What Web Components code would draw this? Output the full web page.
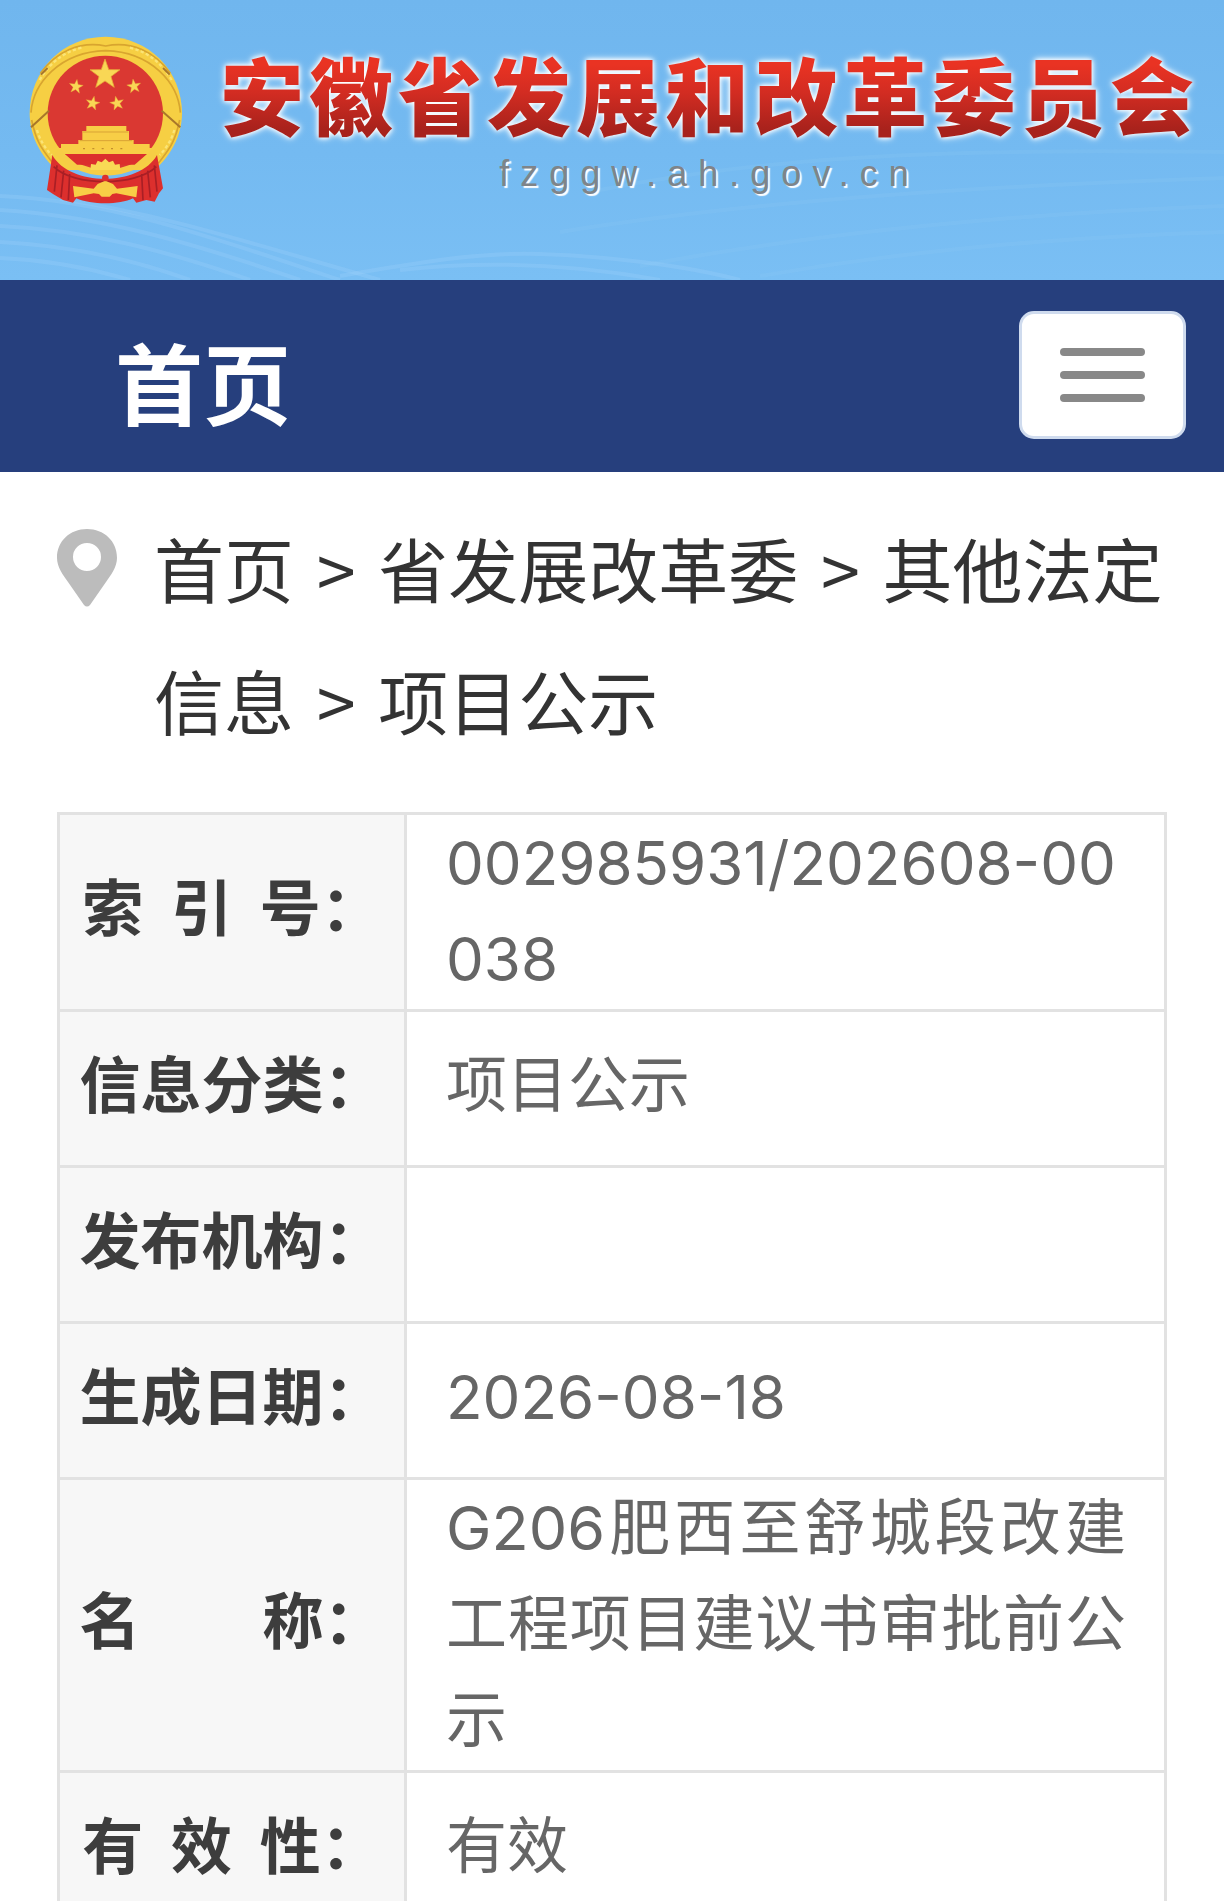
<!DOCTYPE html>
<html lang="zh-CN">
<head>
<meta charset="UTF-8">
<meta name="viewport" content="width=device-width, initial-scale=1">
<title>安徽省发展和改革委员会</title>
<style>
    :root {
        --nav-color: #263f7d;
        --line-color: #e2e2e2;
        --label-bg: #f7f7f7;
        --text-color: #333;
        --label-color: #3d3d3d;
        --value-color: #666;
    }
    body {
        margin: 0;
        background: #fff;
        color: var(--text-color);
        font-family: "Noto Sans CJK SC", sans-serif;
    }
    main {
        padding: 30px 57px 0;
    }
</style>
</head>
<body>
<site-header>
    安徽省发展和改革委员会
    <span slot="domain">fzggw.ah.gov.cn</span>
</site-header>
<site-nav><a href="#home">首页</a></site-nav>
<main>
    <crumb-trail>
        <crumb-item href="#home">首页</crumb-item>
        <crumb-item href="#fzggw">省发展改革委</crumb-item>
        <crumb-item href="#other">其他法定<wbr>信息</crumb-item>
        <crumb-item href="#project">项目公示</crumb-item>
    </crumb-trail>
    <info-table></info-table>
</main>

<script>
// banner with emblem and site name
class SiteHeader extends HTMLElement {
    constructor() {
        super();
        this.attachShadow({ mode: 'open' });
        this.shadowRoot.innerHTML = `
            <style>
                :host {
                    display: block;
                    position: relative;
                    background: linear-gradient(#70b6ee, #74baf1 55%, #7abff4);
                }
                .waves {
                    position: absolute;
                    inset: 0;
                    width: 100%;
                    height: 100%;
                }
                .banner {
                    position: relative;
                    display: flex;
                    justify-content: space-between;
                    align-items: flex-start;
                    box-sizing: border-box;
                    min-height: 280px;
                    padding: 36px 25px 0 29px;
                }
                .emblem {
                    flex: none;
                    width: 154px;
                    height: 168px;
                }
                .names {
                    display: flex;
                    flex-direction: column;
                    align-items: center;
                }
                h1 {
                    margin: 0;
                    font-size: 84px;
                    line-height: 114px;
                    font-weight: 900;
                    letter-spacing: 5px;
                    white-space: nowrap;
                    color: #d22c22;
                    background: linear-gradient(#e93323 25%, #d22c22 50%, #a8221c 82%);
                    -webkit-background-clip: text;
                    background-clip: text;
                    -webkit-text-fill-color: transparent;
                    filter: drop-shadow(0 0 2px #fff) drop-shadow(0 0 3px #fff);
                }
                .domain {
                    font-family: "Liberation Sans", Arial, sans-serif;
                    font-size: 36px;
                    line-height: 48px;
                    letter-spacing: 11px;
                    color: #7f8489;
                    text-shadow: 2px 2px 1px #fff;
                }
            </style>
            <svg class="waves" viewBox="0 0 1224 280" preserveAspectRatio="none" fill="none" stroke="#a3d4fa" stroke-width="4" stroke-opacity="0.25" aria-hidden="true">
                <path d="M0 196C110 200 220 240 340 280"/>
                <path d="M0 210C100 216 190 242 300 280"/>
                <path d="M0 226C90 230 170 252 250 280"/>
                <path d="M0 242C80 246 140 262 190 280"/>
                <path d="M0 258C50 260 90 268 130 280"/>
                <path d="M60 199C160 214 240 240 380 280"/>
                <path d="M340 276C420 262 480 252 540 254S680 264 740 280"/>
                <path d="M400 270C470 262 560 262 660 280"/>
                <path stroke-opacity="0.1" d="M600 190C800 150 1000 150 1224 152"/>
                <path stroke-opacity="0.1" d="M560 232C760 200 980 186 1224 178"/>
                <path stroke-opacity="0.1" d="M640 266C800 236 1000 214 1224 206"/>
                <path stroke-opacity="0.1" d="M760 276C900 252 1040 238 1224 232"/>
            </svg>
            <div class="banner">
                <svg class="emblem" viewBox="28 48 462 504" role="img" aria-label="国徽">
                    <defs>
                        <path id="star" d="M0-10L2.4-3.2 9.5-3.1 3.8 1.2 5.9 8.1 0 4 -5.9 8.1 -3.8 1.2 -9.5-3.1 -2.4-3.2Z"/>
                    </defs>
                    <path d="M258 50C385 50 487 150 487 280C487 350 450 410 405 450H110C65 410 30 350 30 280C30 150 131 50 258 50Z" fill="#f6cf43"/>
                    <path d="M62 160C110 95 180 62 258 78C336 62 405 95 452 160M34 278C40 190 120 96 258 92C396 96 476 190 482 278M36 300C50 370 70 390 100 430M480 300C466 370 446 390 416 430" fill="none" stroke="#d8a52f" stroke-width="5"/>
                    <path d="M60 180C90 130 130 95 190 82M456 180C426 130 386 95 326 82M52 330C60 360 80 390 96 405M464 330C456 360 436 390 420 405" fill="none" stroke="#fbe476" stroke-width="7" stroke-dasharray="10 7"/>
                    <circle cx="257" cy="280" r="173" fill="#da3832"/>
                    <path d="M34 322L88 272M482 322L426 272M64 164L84 144M450 164L430 144" stroke="#a9772a" stroke-width="6"/>
                    <g fill="#f9d755" stroke="#e8ab38" stroke-width="0.5">
                        <use href="#star" transform="translate(256 164) scale(4.7)"/>
                        <use href="#star" transform="translate(169 200) rotate(8) scale(2.2)"/>
                        <use href="#star" transform="translate(343 199) rotate(-8) scale(2.2)"/>
                        <use href="#star" transform="translate(219 250) rotate(12) scale(2.2)"/>
                        <use href="#star" transform="translate(292 250) rotate(-12) scale(2.2)"/>
                    </g>
                    <path d="M98 405C150 500 360 500 412 405L430 505 418 520 405 545 380 540 350 548 340 535C300 555 215 555 170 535L160 548 130 540 100 522 82 510Z" fill="#dc2f2d"/>
                    <path d="M112 436L104 515M132 452L124 532M150 462L146 540M404 436L412 515M384 452L392 532M366 462L370 540M102 440C160 500 350 500 410 440" fill="none" stroke="#a91f25" stroke-width="5"/>
                    <path d="M200 318H320V333H328V360H342V372H390V384H402L398 402H118L112 384H124V372H176V360H188V333H200Z" fill="#f8ce46"/>
                    <path d="M190 336H326M180 362H338" stroke="#d9a334" stroke-width="3"/>
                    <path d="M190 386H330" stroke="#c48f2d" stroke-width="4" stroke-dasharray="6 22"/>
                    <path d="M112 394C145 425 180 455 258 458C336 455 375 425 404 394" fill="none" stroke="#f6cd45" stroke-width="19"/>
                    <path d="M136 402H382L345 434H172Z" fill="#dc2f2d"/>
                    <path d="M212 450L214 432 228 434 234 422 246 427 257 416 268 427 280 422 286 434 300 432 302 450Z" fill="#f9d955"/>
                    <path d="M160 498L222 506 234 492 257 482 280 492 292 506 354 498 350 532 290 520 278 522 270 530 246 530 238 522 222 520 164 532Z" fill="#f8ce46"/>
                    <circle cx="257" cy="474" r="10" fill="#dc2f2d"/>
                </svg>
                <div class="names">
                    <h1><slot></slot></h1>
                    <div class="domain"><slot name="domain"></slot></div>
                </div>
            </div>
        `;
    }
}

class SiteNav extends HTMLElement {
    constructor() {
        super();
        this.attachShadow({ mode: 'open' });
        this.shadowRoot.innerHTML = `
            <style>
                :host {
                    display: block;
                    background: var(--nav-color);
                }
                nav {
                    display: flex;
                    justify-content: space-between;
                    align-items: flex-start;
                    padding: 31px 38px 23px 115px;
                }
                ::slotted(a) {
                    color: #fff;
                    font-size: 88px;
                    line-height: 138px;
                    font-weight: 700;
                    text-decoration: none;
                }
                button {
                    display: flex;
                    flex-direction: column;
                    justify-content: center;
                    align-items: center;
                    gap: 15px;
                    box-sizing: border-box;
                    width: 167px;
                    height: 128px;
                    padding: 0;
                    border: 3px solid #cfdbee;
                    border-radius: 15px;
                    background: #fff;
                }
                .bar {
                    width: 85px;
                    height: 8px;
                    border-radius: 4px;
                    background: #888;
                }
            </style>
            <nav>
                <slot></slot>
                <button type="button" aria-label="菜单">
                    <span class="bar"></span>
                    <span class="bar"></span>
                    <span class="bar"></span>
                </button>
            </nav>
        `;
    }
}

class CrumbTrail extends HTMLElement {
    constructor() {
        super();
        this.attachShadow({ mode: 'open' });
        this.shadowRoot.innerHTML = `
            <style>
                :host {
                    display: flex;
                    align-items: flex-start;
                    gap: 37px;
                    font-size: 70px;
                    line-height: 132px;
                }
                svg {
                    flex: none;
                    width: 60px;
                    height: 78px;
                    margin-top: 27px;
                }
                nav {
                    flex: 1;
                }
            </style>
            <svg viewBox="0 0 60 78" aria-hidden="true">
                <path fill="#bcbcbc" fill-rule="evenodd" d="M30 0C13 0 0 12 0 29C0 38 6 46 11 53L27 76Q30 79 33 76L49 53C54 46 60 38 60 29C60 12 47 0 30 0ZM30 14A14 14 0 1 1 30 42A14 14 0 1 1 30 14Z"/>
            </svg>
            <nav><slot></slot></nav>
        `;
    }
}

// one link, followed by ">" unless it is the last
class CrumbItem extends HTMLElement {
    constructor() {
        super();
        this.attachShadow({ mode: 'open' });
    }

    connectedCallback() {
        this.shadowRoot.innerHTML = `
            <style>
                :host {
                    display: inline;
                }
                a {
                    color: inherit;
                    text-decoration: none;
                }
                .sep {
                    margin: 0 7px;
                }
                :host(:last-of-type) .sep {
                    display: none;
                }
            </style><a href="${this.getAttribute('href')}"><slot></slot></a><span class="sep"> &gt;</span>`;
    }
}

class InfoTable extends HTMLElement {
    constructor() {
        super();
        this.attachShadow({ mode: 'open' });
        this.rows = [
            { label: '索&nbsp;&nbsp;引&nbsp;&nbsp;号：', value: '002985931/202608-00<wbr>038', type: 'number long' },
            { label: '信息分类：', value: '项目公示' },
            { label: '发布机构：', value: '' },
            { label: '生成日期：', value: '2026-08-18', type: 'number' },
            { label: '名　　称：', value: 'G206肥西至舒城段改建工程项目建议书审批前公示', type: 'long' },
            { label: '有&nbsp;&nbsp;效&nbsp;&nbsp;性：', value: '有效' }
        ];
    }

    connectedCallback() {
        this.render();
    }

    render() {
        this.shadowRoot.innerHTML = `
            <style>
                :host {
                    display: block;
                    margin-top: 46px;
                }
                table {
                    width: 100%;
                    table-layout: fixed;
                    border-collapse: collapse;
                    font-size: 61px;
                    line-height: 96px;
                }
                th, td {
                    box-sizing: border-box;
                    height: 156px;
                    border: 3px solid var(--line-color);
                    vertical-align: middle;
                }
                th {
                    width: 347px;
                    padding: 0 0 14px;
                    background: var(--label-bg);
                    color: var(--label-color);
                    font-weight: 700;
                    text-align: center;
                    white-space: nowrap;
                }
                td {
                    padding: 0 38px 8px 39px;
                    color: var(--value-color);
                    font-family: Inter, "Noto Sans CJK SC", sans-serif;
                    text-align: justify;
                }
                .long {
                    padding-bottom: 2px;
                }
                .number {
                    font-size: 60px;
                }
            </style>
            <table>
                <tbody>
                    ${this.rows.map(row => `
                        <tr>
                            <th scope="row">${row.label}</th>
                            <td class="${row.type || 'text'}">${row.value}</td>
                        </tr>
                    `).join('')}
                </tbody>
            </table>
        `;
    }
}

customElements.define('site-header', SiteHeader);
customElements.define('site-nav', SiteNav);
customElements.define('crumb-trail', CrumbTrail);
customElements.define('crumb-item', CrumbItem);
customElements.define('info-table', InfoTable);
</script>
</body>
</html>
